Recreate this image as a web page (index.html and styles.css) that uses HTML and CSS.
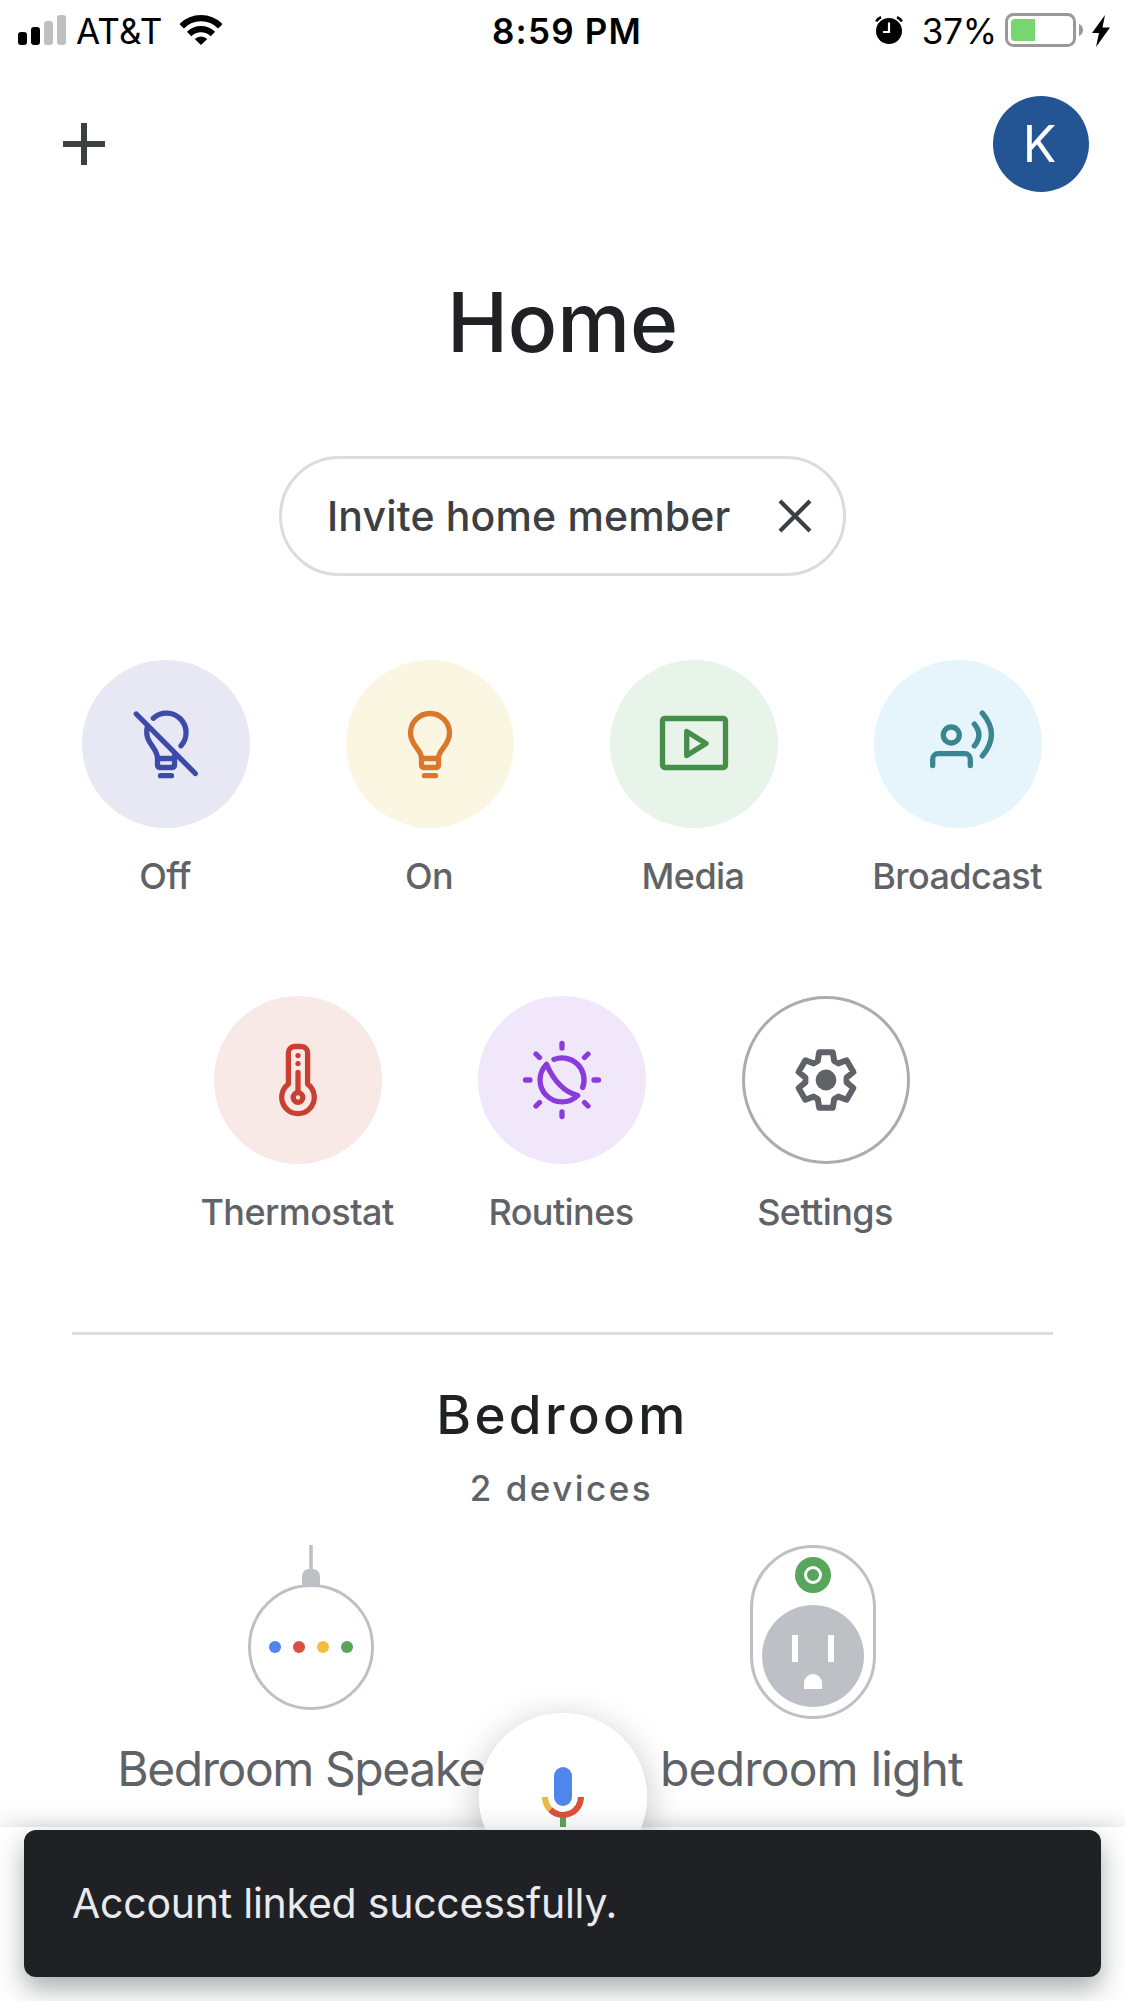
FILE: index.html
```html
<!DOCTYPE html>
<html lang="en">
<head>
<meta charset="utf-8">
<title>Home</title>
<link rel="stylesheet" href="styles.css">
</head>
<body>
<div class="screen">
  <div class="status">
    <div class="status-left">
      <svg class="signal" width="48" height="30" viewBox="0 0 48 30">
        <rect x="0" y="17" width="9" height="13" rx="3"/>
        <rect x="13" y="12" width="9" height="18" rx="3"/>
        <rect x="26" y="6" width="9" height="24" rx="3" fill="#bfbfbf"/>
        <rect x="39" y="0" width="9" height="30" rx="3" fill="#bfbfbf"/>
      </svg>
      <span class="carrier">AT&amp;T</span>
      <svg class="wifi" width="42" height="30" viewBox="-21 -30 42 30">
        <path d="M0 0L-6.3 -6A9 9 0 0 1 6.3 -6Z"/>
        <path d="M-11.9 -11A17 17 0 0 1 11.9 -11M-19.3 -18.7A27 27 0 0 1 19.3 -18.7" fill="none" stroke="#000" stroke-width="6.2"/>
      </svg>
    </div>
    <div class="clock">8:59 PM</div>
    <div class="status-right">
      <svg class="alarm" width="28" height="28" viewBox="0 0 28 28">
        <circle cx="14" cy="15" r="13"/>
        <path d="M1.2 5.6A8 8 0 0 1 6 1.2M26.8 5.6A8 8 0 0 0 22 1.2" fill="none" stroke="#000" stroke-width="2.6"/>
        <path d="M14 6.5V16H8" fill="none" stroke="#fff" stroke-width="2.2"/>
      </svg>
      <span class="percent">37%</span>
      <svg class="battery" width="79" height="34" viewBox="0 0 79 34">
        <rect x="1.5" y="1.5" width="68" height="31" rx="7" fill="none" stroke="#999" stroke-width="3"/>
        <path d="M10 6H30V28H10A4 4 0 0 1 6 24V10A4 4 0 0 1 10 6Z" fill="#78d672"/>
        <path d="M74 11Q78 12.5 78 17T74 23Z" fill="#999"/>
      </svg>
      <svg class="bolt" width="18" height="32" viewBox="0 0 18 32"><path d="M13 0L0 18H7L4 32L18 12.5H10.5Z"/></svg>
    </div>
  </div>

  <header class="topbar">
    <svg width="42" height="42" viewBox="0 0 42 42"><path d="M18 0h6v18h18v6H24v18h-6V24H0v-6h18z" fill="#3c4043"/></svg>
    <div class="avatar">K</div>
  </header>

  <h1 class="title">Home</h1>

  <div class="chip">
    <span>Invite home member</span>
    <svg width="34" height="34" viewBox="0 0 34 34"><path d="M2 2L32 32M32 2L2 32" stroke="#3c4043" stroke-width="4.2"/></svg>
  </div>

  <div class="actions">
    <div class="action-row">
      <div class="action">
        <div class="disc off">
          <svg class="icon" viewBox="-42 -42 84 84">
            <path d="M-12.7 -25.7A19.5 19.5 0 0 1 15 1.7"/>
            <path d="M-18.8 -16.5C-22 -1 -8.5 3 -8.5 14.5V21.5a2 2 0 0 0 2 2H6.5a2 2 0 0 0 2-2V12M-8.5 14.5H8.5M-5.5 31.7H5.5M-29.7 -30L29.3 29.5"/>
          </svg>
        </div>
        <span>Off</span>
      </div>
      <div class="action">
        <div class="disc on">
          <svg class="icon" viewBox="-42 -42 84 84">
            <path d="M-8.5 14.5V21.5a2 2 0 0 0 2 2H6.5a2 2 0 0 0 2-2V14.5C8.5 5 19.5 2 19.5 -11A19.5 19.5 0 0 0 -19.5 -11C-19.5 2 -8.5 5 -8.5 14.5H8.5M-5.5 31.7H5.5"/>
          </svg>
        </div>
        <span>On</span>
      </div>
      <div class="action">
        <div class="disc media">
          <svg class="icon" viewBox="-42 -42 84 84">
            <rect x="-31.5" y="-25.5" width="63" height="49" rx="2.2"/>
            <path d="M-7.3 -12.5V11.5L12 -.5Z"/>
          </svg>
        </div>
        <span>Media</span>
      </div>
      <div class="action">
        <div class="disc broadcast">
          <svg class="icon" viewBox="-42 -42 84 84">
            <circle cx="-6.7" cy="-9" r="8"/>
            <path d="M-25.3 21.5V15a5.3 5.3 0 0 1 5.3-5.3H7a5.3 5.3 0 0 1 5.3 5.3V21.5M16.3 -20Q25.5 -9 16.3 2M24.3 -31Q42.5 -9.5 24.3 12"/>
          </svg>
        </div>
        <span>Broadcast</span>
      </div>
    </div>
    <div class="action-row">
      <div class="action">
        <div class="disc thermostat">
          <svg class="icon" viewBox="-42 -42 84 84">
            <path d="M-9.6 4.1V-27.5a6 6 0 0 1 6-6H3.6a6 6 0 0 1 6 6V4.1A16.3 16.3 0 1 1 -9.6 4.1ZM0 -7.5V12"/>
            <circle cx="0" cy="17.5" r="4.8"/>
            <path d="M0 -24.4v.01M0 -16.4v.01"/>
          </svg>
        </div>
        <span>Thermostat</span>
      </div>
      <div class="action">
        <div class="disc routines">
          <svg class="icon" viewBox="-42 -42 84 84">
            <path d="M-8 -20.6A22 22 0 0 1 20.7 7.5M-15.5 -15.7A22 22 0 0 0 15.7 15.5Q-4 10.5 -15.5 -15.7Z"/>
            <path d="M0 -36.5V-32M0 36.5V32M-36.5 0H-32M36.5 0H32M-26 -26L-22.5 -22.5M26 -26L22.5 -22.5M-26 26L-22.5 22.5M26 26L22.5 22.5"/>
          </svg>
        </div>
        <span>Routines</span>
      </div>
      <div class="action">
        <div class="disc settings">
          <svg class="icon" viewBox="-42 -42 84 84">
            <path stroke-width="6" d="M-8.2 -19L-6.8 -27.7H6.8L8.2 -19L12.4 -16.6L20.6 -19.7L27.4 -8L20.6 -2.4V2.4L27.4 8L20.6 19.7L12.4 16.6L8.2 19L6.8 27.7H-6.8L-8.2 19L-12.4 16.6L-20.6 19.7L-27.4 8L-20.6 2.4V-2.4L-27.4 -8L-20.6 -19.7L-12.4 -16.6Z"/>
            <circle r="10.4" fill="#5f6368" stroke="none"/>
          </svg>
        </div>
        <span>Settings</span>
      </div>
    </div>
  </div>

  <section class="room">
    <h2>Bedroom</h2>
    <p class="count">2 devices</p>
    <div class="devices">
      <div class="device">
        <svg width="126" height="180" viewBox="0 0 126 180">
          <path d="M63 0V26" stroke="#bdc1c6" stroke-width="3.6"/>
          <path d="M54 41V31a7 7 0 0 1 7-7h4a7 7 0 0 1 7 7V41Z" fill="#bdc1c6"/>
          <circle cx="63" cy="102" r="61.5" fill="#fff" stroke="#bdc1c6" stroke-width="3"/>
          <circle cx="27" cy="102" r="6" fill="#5086ec"/>
          <circle cx="51" cy="102" r="6" fill="#d95040"/>
          <circle cx="75" cy="102" r="6" fill="#f2bd42"/>
          <circle cx="99" cy="102" r="6" fill="#58a55c"/>
        </svg>
        <span class="name speaker">Bedroom Speaker</span>
      </div>
      <div class="device">
        <svg width="126" height="180" viewBox="0 0 126 180">
          <rect x="1.5" y="1.5" width="123" height="171" rx="61.5" fill="#fff" stroke="#bdc1c6" stroke-width="3"/>
          <circle cx="63" cy="30" r="18" fill="#58a55c"/>
          <circle cx="63" cy="30" r="7.5" fill="none" stroke="#fff" stroke-width="3"/>
          <circle cx="63" cy="111" r="51" fill="#bdc1c6"/>
          <path d="M42 90h6v27h-6zM78 90h6v27h-6zM54 144v-6a9 9 0 0 1 18 0v6z" fill="#fff"/>
        </svg>
        <span class="name light">bedroom light</span>
      </div>
    </div>
  </section>

  <div class="navbar"></div>
  <div class="mic">
    <svg width="42" height="63" viewBox="0 0 42 63">
      <rect x="12" y="0" width="18" height="39" rx="9" fill="#5086ec"/>
      <path d="M18 50h6v10h-6z" fill="#58a55c"/>
      <path d="M3 30A18 18 0 0 0 8.3 42.7" fill="none" stroke="#ecb83f" stroke-width="6"/>
      <path d="M8.3 42.7A18 18 0 0 0 39 30" fill="none" stroke="#d95040" stroke-width="6"/>
    </svg>
  </div>
  <div class="snackbar">Account linked successfully.</div>
</div>
</body>
</html>
```
FILE: styles.css
```css
* { box-sizing: border-box; }
body {
  margin: 0;
  background: #fff;
  font-family: Inter, "Liberation Sans", sans-serif;
}
svg { display: block; flex: none; }
h1, h2, p { margin: 0; }

.screen {
  position: relative;
  width: 1125px;
  height: 2001px;
  overflow: hidden;
  background: #fff;
}

.status {
  display: grid;
  grid-template-columns: 1fr auto 1fr;
  align-items: center;
  height: 62px;
  padding: 0 15px 0 18px;
  font-size: 35px;
  line-height: 62px;
  color: #000;
}
.status-left, .status-right { display: flex; align-items: center; }
.status-right { justify-content: flex-end; }
.signal { margin-top: -2px; }
.carrier { margin-left: 10px; letter-spacing: .2px; }
.wifi { margin-left: 17px; margin-top: -2px; }
.clock { margin-left: 6px; font-weight: 600; letter-spacing: 1.2px; }
.alarm { margin-right: 19px; margin-top: -2px; }
.percent { letter-spacing: -.2px; }
.battery { margin-left: 8px; margin-top: -2px; }
.bolt { margin-left: 8px; margin-top: -1px; }

.topbar {
  display: flex;
  align-items: center;
  justify-content: space-between;
  height: 96px;
  margin-top: 34px;
  padding: 0 36px 0 63px;
}
.avatar {
  width: 96px;
  height: 96px;
  padding-right: 3px;
  border-radius: 50%;
  background: #235594;
  color: #fff;
  font-size: 50px;
  line-height: 96px;
  text-align: center;
}

.title {
  margin-top: 81px;
  font-size: 82px;
  font-weight: 500;
  line-height: 100px;
  letter-spacing: -.1px;
  text-align: center;
  color: #202124;
}

.chip {
  display: flex;
  align-items: center;
  justify-content: space-between;
  width: 567px;
  height: 120px;
  margin: 83px auto 0;
  padding: 0 31px 0 45px;
  border: 3px solid #dadce0;
  border-radius: 60px;
  font-size: 41px;
  font-weight: 500;
  letter-spacing: .16px;
  color: #3c4043;
}

.actions {
  display: flex;
  flex-direction: column;
  gap: 98px;
  margin-top: 84px;
}
.action-row { display: flex; justify-content: center; padding-right: 1px; }
.action {
  display: flex;
  flex-direction: column;
  align-items: center;
  gap: 26px;
  width: 264px;
  font-size: 36px;
  font-weight: 500;
  line-height: 44px;
  letter-spacing: -.58px;
  color: #5f6368;
}
.action span { padding-right: 2px; }
.disc {
  display: flex;
  align-items: center;
  justify-content: center;
  width: 168px;
  height: 168px;
  border-radius: 50%;
}
.icon {
  width: 84px;
  height: 84px;
  fill: none;
  stroke: currentColor;
  stroke-width: 5.3;
  stroke-linecap: round;
  stroke-linejoin: round;
}
.off { background: #e8e8f5; color: #3c4aa8; }
.on { background: #fbf6e2; color: #d9782d; }
.media { background: #e8f3e9; color: #468e49; }
.broadcast { background: #e6f5fb; color: #3b8590; }
.thermostat { background: #f8e9e6; color: #c84031; }
.routines { background: #f1e7fb; color: #893bdc; }
.settings { border: 3px solid #a9acb2; color: #5f6368; }

.room {
  width: 981px;
  margin: 98px 72px 0;
  border-top: 3px solid #dadce0;
  text-align: center;
}
.room h2 {
  margin-top: 48px;
  font-size: 53px;
  font-weight: 500;
  line-height: 64px;
  letter-spacing: 3.3px;
  color: #202124;
}
.count {
  margin-top: 19px;
  padding-right: 2px;
  font-size: 35px;
  font-weight: 500;
  line-height: 44px;
  letter-spacing: 2.5px;
  color: #5f6368;
}
.devices {
  display: grid;
  grid-template-columns: 502px 502px;
  margin: 35px -11px 0 -12px;
}
.device { display: flex; flex-direction: column; align-items: center; gap: 14px; }
.name {
  padding-right: 3px;
  font-size: 48px;
  line-height: 60px;
  color: #5f6368;
  white-space: nowrap;
}
.speaker { letter-spacing: -1.45px; }
.light { letter-spacing: -.85px; }

/* Overlays pinned above the scrolling content */
.navbar {
  position: absolute;
  left: 0;
  right: 0;
  bottom: 0;
  height: 174px;
  background: #fff;
  box-shadow: 0 0 24px rgba(32, 40, 36, .2);
}
.mic {
  position: absolute;
  left: 479px;
  top: 1713px;
  width: 168px;
  height: 168px;
  padding: 54px 63px;
  border-radius: 50%;
  background: linear-gradient(#fff 50%, #f6f6f6 72%);
  box-shadow: 0 8px 36px rgba(0, 0, 0, .24);
}
.snackbar {
  position: absolute;
  left: 24px;
  top: 1830px;
  width: 1077px;
  height: 147px;
  padding-left: 48px;
  border-radius: 12px;
  background: #202124;
  box-shadow: 0 12px 27px rgba(32, 40, 36, .38);
  font-size: 41px;
  line-height: 147px;
  letter-spacing: -.24px;
  color: #e8eaed;
}
```
